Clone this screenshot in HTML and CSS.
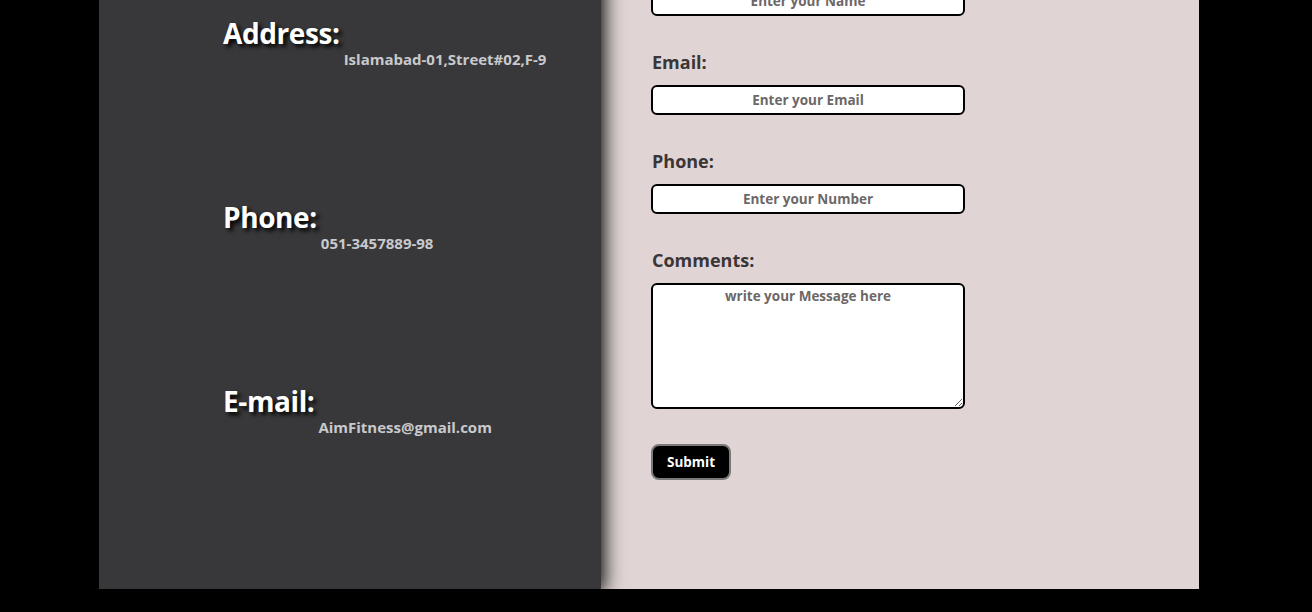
FILE: index.html
```html
<!DOCTYPE html>
<html lang="en">
<head>
<meta charset="utf-8">
<title>Contact</title>
<link rel="stylesheet" href="styles.css">
</head>
<body>
<main class="contact">
  <section class="info">
    <div class="info-item">
      <h2 class="info-title">Address:</h2>
      <p class="info-value">Islamabad-01,Street#02,F-9</p>
    </div>
    <div class="info-item">
      <h2 class="info-title">Phone:</h2>
      <p class="info-value">051-3457889-98</p>
    </div>
    <div class="info-item">
      <h2 class="info-title">E-mail:</h2>
      <p class="info-value">AimFitness@gmail.com</p>
    </div>
  </section>
  <section class="form-side">
    <form class="form">
      <div class="field">
        <label class="label" for="name">Name:</label>
        <input class="input" id="name" type="text" placeholder="Enter your Name">
      </div>
      <div class="field">
        <label class="label" for="email">Email:</label>
        <input class="input" id="email" type="text" placeholder="Enter your Email">
      </div>
      <div class="field">
        <label class="label" for="phone">Phone:</label>
        <input class="input" id="phone" type="text" placeholder="Enter your Number">
      </div>
      <div class="field">
        <label class="label" for="comments">Comments:</label>
        <textarea class="input textarea" id="comments" placeholder="write your Message here"></textarea>
      </div>
      <button class="submit" type="button">Submit</button>
    </form>
  </section>
</main>
</body>
</html>
```
FILE: styles.css
```css
html, body {
  margin: 0;
  padding: 0;
  background: #000;
  overflow: hidden;
}
body {
  font-family: "Open Sans", "Noto Sans", sans-serif;
  height: 612px;
}
.contact {
  display: flex;
  width: 1100px;
  height: 689px;
  margin: -100px 0 0 99px;
}
.info {
  position: relative;
  z-index: 1;
  width: 502px;
  flex: none;
  background: #38383a;
  box-shadow: 0 0 18px 3px #000;
  padding: 114px 0 0 124px;
  box-sizing: border-box;
  display: flex;
  flex-direction: column;
  gap: 134px;
}
.info-item {
  display: flex;
  align-items: flex-start;
  gap: 4px;
  height: 50px;
}
.info-title {
  margin: 0;
  font-size: 28px;
  line-height: 38px;
  font-weight: 700;
  color: #fff;
  text-shadow: 3px 3px 4px #000;
  letter-spacing: -0.4px;
}
.info-value {
  margin: 35px 0 0;
  font-size: 15px;
  line-height: 20px;
  font-weight: 700;
  color: #c9c9cc;
  letter-spacing: 0;
}
.form-side {
  flex: 1;
  background: #e0d4d4;
  padding: 51px 0 0 50px;
  box-sizing: border-box;
}
.form {
  display: flex;
  flex-direction: column;
  align-items: flex-start;
}
.field {
  display: flex;
  flex-direction: column;
  align-items: flex-start;
  gap: 11px;
  margin-bottom: 34px;
}
.label {
  font-size: 18px;
  line-height: 24px;
  font-weight: 700;
  color: #3a3536;
  padding-left: 1px;
  letter-spacing: 0;
}
.input {
  width: 314px;
  height: 30px;
  box-sizing: border-box;
  border: 2px solid #000;
  border-radius: 6px;
  background: #fff;
  text-align: center;
  font-family: inherit;
  font-size: 13.5px;
  font-weight: 700;
  color: #333;
  padding: 0 6px;
  outline: none;
}
.input::placeholder {
  color: #6d6767;
  opacity: 1;
}
.textarea {
  height: 126px;
  padding-top: 2px;
  resize: vertical;
  margin-bottom: 1px;
}
.submit {
  width: 80px;
  height: 36px;
  background: #000;
  color: #fff;
  border: 2px solid #7a7a7a;
  border-radius: 8px;
  font-family: inherit;
  font-size: 13.5px;
  font-weight: 700;
  cursor: pointer;
}
```
